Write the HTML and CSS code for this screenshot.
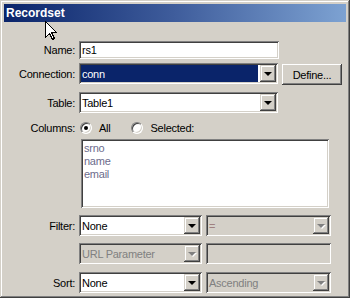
FILE: index.html
```html
<!DOCTYPE html>
<html>
<head>
<meta charset="utf-8">
<link rel="stylesheet" href="styles.css">
</head>
<body>
<div class="window">
  <div class="titlebar">Recordset</div>
  <div class="content">
    <div class="row r-name">
      <span class="lbl">Name:</span>
      <div class="field w-name"><span class="txt">rs1</span></div>
    </div>
    <div class="row r-conn">
      <span class="lbl">Connection:</span>
      <div class="field combo w-conn"><span class="txt hl">conn</span><span class="arrow"></span></div>
      <div class="button">Define...</div>
    </div>
    <div class="row r-table">
      <span class="lbl">Table:</span>
      <div class="field combo w-conn"><span class="txt">Table1</span><span class="arrow"></span></div>
    </div>
    <div class="row r-cols">
      <span class="lbl">Columns:</span>
      <span class="radio checked"></span><span class="rlabel first">All</span>
      <span class="radio"></span><span class="rlabel">Selected:</span>
    </div>
    <div class="listbox">
      <div class="item">srno</div>
      <div class="item">name</div>
      <div class="item">email</div>
    </div>
    <div class="row r-filter">
      <span class="lbl">Filter:</span>
      <div class="field combo w-half"><span class="txt">None</span><span class="arrow"></span></div>
      <div class="field combo w-half2 disabled"><span class="txt eq">=</span><span class="arrow off"></span></div>
    </div>
    <div class="row r-url">
      <span class="lbl"></span>
      <div class="field combo w-half disabled"><span class="txt">URL Parameter</span><span class="arrow off"></span></div>
      <div class="field w-half2 disabled"></div>
    </div>
    <div class="row r-sort">
      <span class="lbl">Sort:</span>
      <div class="field combo w-half"><span class="txt">None</span><span class="arrow"></span></div>
      <div class="field combo w-half2 disabled"><span class="txt">Ascending</span><span class="arrow off"></span></div>
    </div>
  </div>
  <svg class="cursor" width="13" height="20" viewBox="0 0 13 20">
    <path d="M0.5 0.5 L0.5 16.5 L4.5 12.5 L7.5 18.5 L9.5 17.5 L6.5 11.5 L11.5 11.5 Z" fill="#fff" stroke="#000" stroke-width="1" shape-rendering="crispEdges"/>
  </svg>
</div>
</body>
</html>
```

FILE: styles.css
```css
html, body {
  margin: 0;
  padding: 0;
  background: #ffffff;
}
body {
  font-family: "Liberation Sans", Arial, sans-serif;
  font-size: 11px;
  letter-spacing: -0.25px;
  color: #000;
}
.window {
  position: relative;
  box-sizing: border-box;
  width: 350px;
  height: 298px;
  padding: 4px;
  background: #d4d0c8;
  box-shadow: inset -1px -1px #404040, inset 1px 1px #d4d0c8, inset -2px -2px #808080, inset 2px 2px #ffffff;
}
.titlebar {
  height: 18px;
  line-height: 18px;
  padding-left: 2px;
  background: linear-gradient(to right, #0a246a 0%, #3f5d9c 50%, #7da2d2 100%);
  color: #fff;
  font-weight: bold;
  font-size: 12px;
  letter-spacing: 0;
}
.content {
  padding-top: 19px;
}
.row {
  display: flex;
  align-items: center;
}
.lbl {
  width: 71px;
  margin-right: 4px;
  text-align: right;
  flex: none;
}
.r-name { height: 18px; }
.r-conn { margin-top: 4px; height: 21px; }
.r-table { margin-top: 8px; height: 21px; }
.r-cols { margin-top: 8px; height: 13px; }
.r-filter { margin-top: 7px; height: 21px; }
.r-url { margin-top: 7px; height: 21px; }
.r-sort { margin-top: 8px; height: 21px; }

.field {
  box-sizing: border-box;
  height: 100%;
  background: #fff;
  box-shadow: inset 1px 1px #808080, inset -1px -1px #ffffff, inset 2px 2px #404040, inset -2px -2px #d4d0c8;
  display: flex;
  align-items: stretch;
  padding: 2px;
  flex: none;
}
.field .txt {
  flex: 1;
  display: flex;
  align-items: center;
  padding-left: 1px;
  white-space: nowrap;
  overflow: hidden;
}
.field .txt.hl {
  background: #0a246a;
  color: #fff;
  margin-right: 2px;
}
.field.disabled {
  background: #d4d0c8;
  color: #808080;
}
.field.disabled .txt.eq {
  color: #a08080;
}
.w-name { width: 200px; }
.w-conn { width: 199px; }
.w-half { width: 123px; }
.w-half2 { width: 125px; margin-left: 4px; }

.arrow {
  position: relative;
  width: 16px;
  flex: none;
  background: #d4d0c8;
  box-shadow: inset -1px -1px #404040, inset 1px 1px #d4d0c8, inset -2px -2px #808080, inset 2px 2px #ffffff;
}
.arrow::after {
  content: "";
  position: absolute;
  left: 4px;
  top: 50%;
  margin-top: -2px;
  border-left: 4px solid transparent;
  border-right: 4px solid transparent;
  border-top: 4px solid #000;
  width: 0;
  height: 0;
}
.arrow.off::after {
  border-top-color: #808080;
  filter: drop-shadow(1px 1px 0 #ffffff);
}

.button {
  box-sizing: border-box;
  width: 60px;
  height: 21px;
  margin-left: 4px;
  margin-top: 2px;
  display: flex;
  align-items: center;
  justify-content: center;
  background: #d4d0c8;
  box-shadow: inset -1px -1px #404040, inset 1px 1px #ffffff, inset -2px -2px #808080, inset 2px 2px #d4d0c8;
}

.radio {
  position: relative;
  box-sizing: border-box;
  width: 12px;
  height: 12px;
  border-radius: 50%;
  background: #fff;
  border: 1px solid;
  border-color: #808080 #ffffff #ffffff #808080;
  box-shadow: inset 1px 1px #404040, inset -1px -1px #d4d0c8;
  margin-left: 1px;
  flex: none;
}
.radio.checked::after {
  content: "";
  position: absolute;
  left: 3px;
  top: 3px;
  width: 4px;
  height: 4px;
  border-radius: 50%;
  background: #000;
}
.rlabel {
  margin-left: 7px;
}
.rlabel.first {
  margin-right: 20px;
}

.listbox {
  box-sizing: border-box;
  width: 248px;
  height: 69px;
  margin-top: 5px;
  margin-left: 77px;
  padding: 3px 3px;
  background: #fff;
  box-shadow: inset 1px 1px #808080, inset -1px -1px #ffffff, inset 2px 2px #404040, inset -2px -2px #d4d0c8;
  color: #6c6c8c;
}
.item {
  height: 13px;
  line-height: 13px;
}

.cursor {
  position: absolute;
  left: 45px;
  top: 21px;
}
```
